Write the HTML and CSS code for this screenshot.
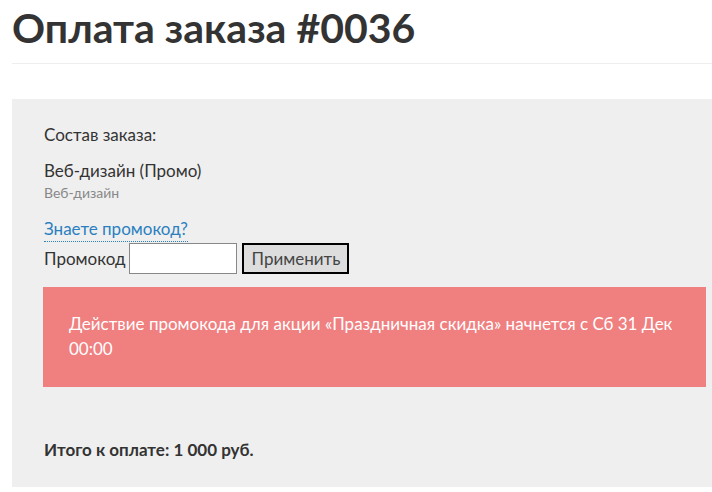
FILE: index.html
```html
<!DOCTYPE html>
<html lang="ru">
<head>
<meta charset="utf-8">
<link rel="stylesheet" href="styles.css">
</head>
<body>
<div class="page">
  <h1 class="title">Оплата заказа #0036</h1>
  <hr class="divider">
  <div class="order">
    <p class="label">Состав заказа:</p>
    <div class="item">
      <div class="item-name">Веб-дизайн (Промо)</div>
      <div class="item-cat">Веб-дизайн</div>
    </div>
    <a class="promo-link" href="#">Знаете промокод?</a>
    <form class="promo-form">
      <label class="promo-label">Промокод</label>
      <input class="promo-input" type="text">
      <button class="promo-btn" type="button">Применить</button>
    </form>
    <div class="alert">Действие промокода для акции «Праздничная скидка» начнется с Сб 31 Дек 00:00</div>
    <p class="total">Итого к оплате: 1 000 руб.</p>
  </div>
</div>
</body>
</html>
```
FILE: styles.css
```css
html, body {
  margin: 0;
  padding: 0;
  background: #fff;
  overflow: hidden;
}
body {
  font-family: "Lato", "Open Sans", sans-serif;
  color: #333;
  font-size: 17px;
}
.page {
  padding-left: 12px;
}
.title {
  margin: 0;
  padding-top: 4px;
  font-size: 41px;
  line-height: 48px;
  font-weight: 700;
  color: #333;
}
.divider {
  border: 0;
  border-top: 1px solid #eee;
  margin: 11px 0 0 0;
}
.order {
  margin-top: 35px;
  background: #efefef;
  padding: 25px 6px 26px 32px;
}
.label {
  margin: 0;
  line-height: 22px;
}
.item {
  margin-top: 14px;
}
.item-name {
  line-height: 22px;
}
.item-cat {
  margin-top: 2px;
  font-size: 14px;
  color: #888;
  line-height: 18px;
}
.promo-link {
  display: inline-block;
  margin-top: 17px;
  color: #2b7fbf;
  text-decoration: none;
  border-bottom: 1px dotted #2b7fbf;
  line-height: 20px;
  padding-bottom: 2px;
}
.promo-form {
  display: flex;
  align-items: center;
  margin-top: 1px;
}
.promo-label {
  margin-right: 4px;
}
.promo-input {
  width: 108px;
  height: 31px;
  box-sizing: border-box;
  border: 1px solid #888;
  background: #fff;
  margin: 0 5px 0 0;
  padding: 0;
}
.promo-btn {
  width: 107px;
  height: 31px;
  box-sizing: border-box;
  border: 2px solid #000;
  background: #ddd;
  font-family: inherit;
  font-size: 17px;
  color: #444;
  padding: 0;
}
.alert {
  margin: 13px 0 0 -1px;
  background: #f08080;
  color: #fff;
  padding: 24px 20px 26px 26px;
  line-height: 25px;
}
.total {
  margin: 52px 0 0 0;
  font-weight: 700;
  line-height: 22px;
}
```
